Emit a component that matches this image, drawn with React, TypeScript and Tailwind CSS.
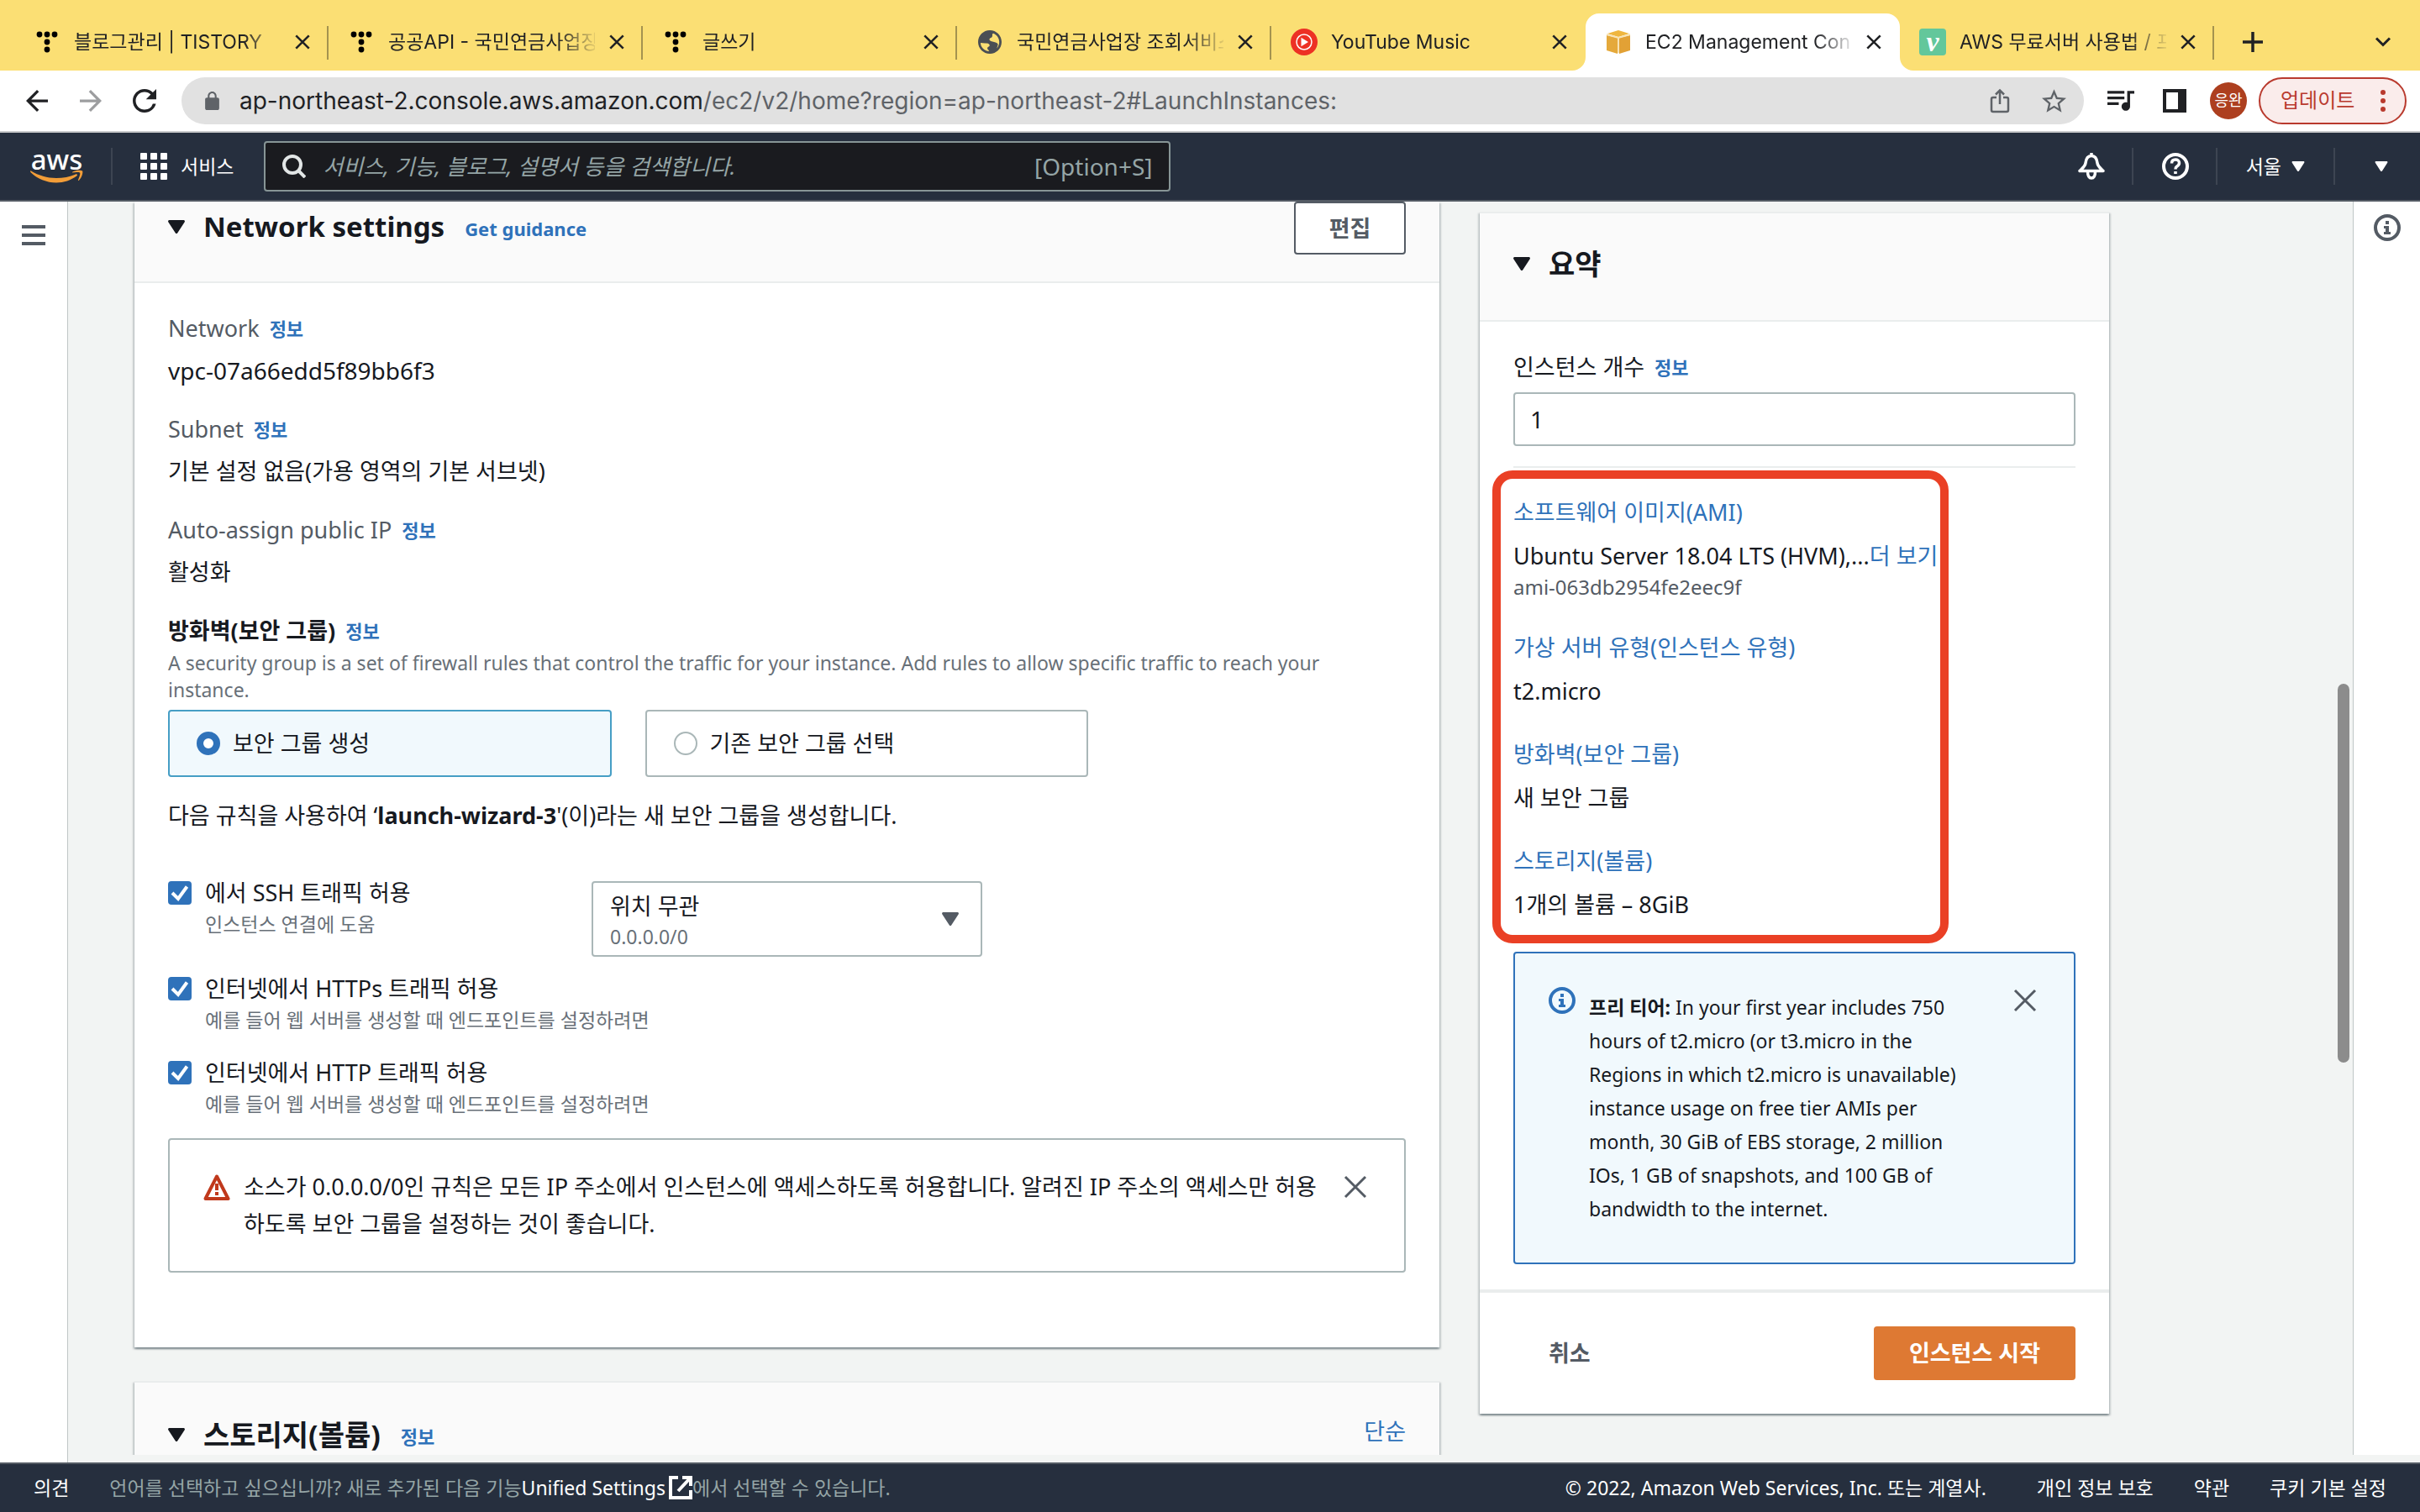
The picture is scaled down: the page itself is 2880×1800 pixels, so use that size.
import React, { useState } from 'react';

type Kids = { children: React.ReactNode };

/* ---------- icons ---------- */

function Triangle({ className }: { className: string }) {
  return (
    <svg viewBox="0 0 20 16" className={className} fill="currentColor" aria-hidden="true">
      <path d="M1.6 0h16.8c1.3 0 2 1.4 1.2 2.4l-8.3 12.9a1.6 1.6 0 0 1-2.6 0L.4 2.4C-.4 1.4.3 0 1.6 0z" />
    </svg>
  );
}

function Cross({ className, weight = 3 }: { className: string; weight?: number }) {
  return (
    <svg viewBox="0 0 28 28" className={className} fill="none" stroke="currentColor" strokeWidth={weight} aria-hidden="true">
      <path d="M2 2l24 24M26 2L2 26" />
    </svg>
  );
}

function InfoIcon({ className }: { className: string }) {
  return (
    <svg viewBox="0 0 32 32" className={className} fill="none" aria-hidden="true">
      <circle cx="16" cy="16" r="14" stroke="currentColor" strokeWidth="4" />
      <path d="M14 8h4v4h-4zM12 14h6v7h2v3h-8v-3h2v-4h-2z" fill="currentColor" />
    </svg>
  );
}

function TistoryIcon() {
  return (
    <svg viewBox="0 0 26 26" className="size-[26px]" aria-hidden="true">
      <circle cx="4" cy="4" r="3.4" />
      <circle cx="13" cy="4" r="3.4" />
      <circle cx="22" cy="4" r="3.4" />
      <circle cx="13" cy="13" r="3.4" />
      <circle cx="13" cy="22" r="3.4" />
    </svg>
  );
}

function GlobeIcon() {
  return (
    <svg viewBox="2 2 20 20" className="size-7" aria-hidden="true">
      <circle cx="12" cy="12" r="9" fill="#fbdf74" />
      <path
        fill="#4a4e54"
        d="M12 2C6.48 2 2 6.48 2 12s4.48 10 10 10 10-4.48 10-10S17.52 2 12 2zm-.6 17.93c-4.2-.3-7.2-3.5-7.3-7.2l3.9.3c1.6 0 3.6.1 3.8 1.7.1 1.1-.9 1.3-1.6 1.7-.5.6-.3 1.5.2 2 .6.5.9.9 1 1.5zm6.5-2.53c.3-1.2.8-2.2 1-3.1.1-1.1-1-1.7-2-2-1.6-.5-3.9-.6-5-1.7-.6-.9 0-1.8.9-2.1 1.3-.4 1.5-1.5 1.3-2.5-.1-.6.2-1.2.9-1.41C17.93 5.78 20 8.65 20 12c0 2.08-.8 3.97-2.1 5.39z"
      />
    </svg>
  );
}

function YouTubeMusicIcon() {
  return (
    <svg viewBox="0 0 32 32" className="size-8" aria-hidden="true">
      <circle cx="16" cy="16" r="16" fill="#ed3124" />
      <circle cx="16" cy="16" r="9" fill="none" stroke="#fff" strokeWidth="1.5" />
      <path d="M12.5 10.8l8.5 5.2-8.5 5.2z" fill="#fff" />
    </svg>
  );
}

function CubeIcon() {
  return (
    <svg viewBox="0 0 28 28" className="size-7" aria-hidden="true">
      <path d="M14 0l13 4-13 4L1 4z" fill="#efb63f" />
      <path d="M0 6l13 3v19L0 24z" fill="#e5a93b" />
      <path d="M28 6L15 9v19l13-4z" fill="#e2a135" />
      <path d="M0 5l14 4 14-4M14 9v18" stroke="#f8e3b4" strokeWidth="2" fill="none" />
    </svg>
  );
}

function VelogIcon() {
  return (
    <span className="flex size-8 items-center justify-center rounded-sm bg-[#63c79b] font-['Liberation_Serif',serif] text-[34px] leading-6 font-bold text-white italic">
      v
    </span>
  );
}

/* ---------- browser chrome ---------- */

const tabs = [
  { title: '블로그관리 | TISTORY', icon: <TistoryIcon /> },
  { title: '공공API - 국민연금사업장', icon: <TistoryIcon /> },
  { title: '글쓰기', icon: <TistoryIcon /> },
  { title: '국민연금사업장 조회서비스', icon: <GlobeIcon /> },
  { title: 'YouTube Music', icon: <YouTubeMusicIcon />, last: true },
  { title: 'EC2 Management Con', icon: <CubeIcon />, active: true },
  { title: 'AWS 무료서버 사용법 / 프', icon: <VelogIcon /> },
];

function TabStrip() {
  return (
    <div className="flex h-[84px] shrink-0 items-end bg-[#fbdf74] pl-[17px] font-[Inter,'Noto_Sans_CJK_KR',sans-serif] text-[23px] text-[#202124]">
      {tabs.map((t) => (
        <div
          key={t.title}
          className={
            t.active
              ? 'relative flex h-[68px] max-w-[374px] min-w-0 flex-1 items-center rounded-t-2xl bg-white pr-[21px] pl-[23px]'
              : 'relative flex h-[68px] max-w-[374px] min-w-0 flex-1 items-center pr-[21px] pl-[23px]'
          }
        >
          {t.active && (
            <>
              <svg viewBox="0 0 16 16" className="absolute bottom-0 -left-4 size-4" aria-hidden="true">
                <path d="M16 0v16H0A16 16 0 0 0 16 0z" fill="#fff" />
              </svg>
              <svg viewBox="0 0 16 16" className="absolute -right-4 bottom-0 size-4" aria-hidden="true">
                <path d="M0 0v16h16A16 16 0 0 1 0 0z" fill="#fff" />
              </svg>
            </>
          )}
          <span className="mr-4 flex w-8 shrink-0 justify-center">{t.icon}</span>
          <span className="mr-4 min-w-0 flex-1 overflow-hidden mask-[linear-gradient(to_right,black_82%,transparent_102%)] leading-8 whitespace-nowrap">
            {t.title}
          </span>
          <button type="button" aria-label="탭 닫기" className="flex w-5 shrink-0 justify-center">
            <Cross className="size-[18px]" weight={4} />
          </button>
          {!t.active && !t.last && <span className="absolute top-[15px] right-0 h-10 w-0.5 bg-[#a4934f]" />}
        </div>
      ))}
      <button type="button" aria-label="새 탭" className="ml-8 flex h-[68px] w-7 items-center justify-center">
        <svg viewBox="0 0 24 24" className="size-6" fill="none" stroke="currentColor" strokeWidth="3.5" aria-hidden="true">
          <path d="M12 0v24M0 12h24" />
        </svg>
      </button>
      <button type="button" aria-label="탭 검색" className="mr-[34px] ml-auto flex h-[68px] items-center">
        <svg viewBox="0 0 20 12" className="h-3 w-5" fill="none" stroke="currentColor" strokeWidth="3" aria-hidden="true">
          <path d="M2 1.5l8 8 8-8" />
        </svg>
      </button>
    </div>
  );
}

function Toolbar() {
  return (
    <div className="flex h-[74px] shrink-0 items-center border-b-2 border-[#c9cacb] bg-white pr-4 pl-7 font-[Inter,'Noto_Sans_CJK_KR',sans-serif] text-[#202124]">
      <button type="button" aria-label="뒤로" className="mr-8 flex w-8 justify-center">
        <svg viewBox="4 4 16 16" className="size-[26px]" fill="currentColor" aria-hidden="true">
          <path d="M20 11H7.83l5.59-5.59L12 4l-8 8 8 8 1.41-1.41L7.83 13H20v-2z" />
        </svg>
      </button>
      <button type="button" aria-label="앞으로" className="mr-8 flex w-8 justify-center text-[#9c9d9f]">
        <svg viewBox="4 4 16 16" className="size-[26px]" fill="currentColor" aria-hidden="true">
          <path d="M12 4l-1.41 1.41L16.17 11H4v2h12.17l-5.58 5.59L12 20l8-8z" />
        </svg>
      </button>
      <button type="button" aria-label="새로고침" className="mr-7 flex w-8 justify-center">
        <svg viewBox="4 4 16 16" className="size-7" fill="currentColor" aria-hidden="true">
          <path d="M17.65 6.35A7.958 7.958 0 0 0 12 4c-4.42 0-7.99 3.58-7.99 8s3.57 8 7.99 8c3.73 0 6.84-2.55 7.73-6h-2.08A5.99 5.99 0 0 1 12 18c-3.31 0-6-2.69-6-6s2.69-6 6-6c1.66 0 3.14.69 4.22 1.78L13 11h7V4l-2.35 2.35z" />
        </svg>
      </button>
      <div className="flex h-14 min-w-0 flex-1 items-center rounded-full bg-[#e1e1e1] pr-5 pl-7 text-[#5f6368]">
        <svg viewBox="4 1 16 21" className="mr-6 h-[22px] w-[17px] shrink-0" fill="currentColor" aria-hidden="true">
          <path d="M18 8h-1V6c0-2.76-2.24-5-5-5S7 3.24 7 6v2H6c-1.1 0-2 .9-2 2v10c0 1.1.9 2 2 2h12c1.1 0 2-.9 2-2V10c0-1.1-.9-2-2-2zM9 6c0-1.66 1.34-3 3-3s3 1.34 3 3v2H9V6z" />
        </svg>
        <span className="min-w-0 flex-1 overflow-hidden text-[28px] leading-10 whitespace-nowrap">
          <span className="text-[#202124]">ap-northeast-2.console.aws.amazon.com</span>
          /ec2/v2/home?region=ap-northeast-2#LaunchInstances:
        </span>
        <button type="button" aria-label="공유" className="mr-8 flex w-8 justify-center">
          <svg viewBox="0 0 24 30" className="h-[30px] w-6" fill="none" stroke="currentColor" strokeWidth="2.5" aria-hidden="true">
            <path d="M8 11H4a2 2 0 0 0-2 2v13a2 2 0 0 0 2 2h16a2 2 0 0 0 2-2V13a2 2 0 0 0-2-2h-4M12 19V3M7 7.5l5-5 5 5" />
          </svg>
        </button>
        <button type="button" aria-label="북마크" className="flex w-8 justify-center">
          <svg viewBox="2 2 20 19" className="h-7 w-[29px]" fill="currentColor" aria-hidden="true">
            <path d="M22 9.24l-7.19-.62L12 2 9.19 8.63 2 9.24l5.46 4.73L5.82 21 12 17.27 18.18 21l-1.63-7.03L22 9.24zM12 15.4l-3.76 2.27 1-4.28-3.32-2.88 4.38-.38L12 6.1l1.71 4.04 4.38.38-3.32 2.88 1 4.28L12 15.4z" />
          </svg>
        </button>
      </div>
      <button type="button" aria-label="미디어" className="mr-8 ml-7">
        <svg viewBox="3 6 19 14" className="h-6 w-8" fill="currentColor" aria-hidden="true">
          <path d="M15 6H3v2h12V6zm0 4H3v2h12v-2zM3 16h8v-2H3v2zM17 6v8.18c-.31-.11-.65-.18-1-.18-1.66 0-3 1.34-3 3s1.34 3 3 3 3-1.34 3-3V8h3V6h-5z" />
        </svg>
      </button>
      <button type="button" aria-label="측면 패널" className="mr-[26px] flex w-8 justify-center">
        <span className="h-7 w-7 border-4 border-r-[10px] border-[#202124]" />
      </button>
      <span className="mr-3.5 flex size-11 items-center justify-center rounded-full bg-[#ad3f1f] text-lg leading-6 text-white">응완</span>
      <button
        type="button"
        className="flex h-14 w-44 items-center rounded-full border-2 border-[#b93a2e] bg-[#faeceb] pl-6 text-2xl leading-8 text-[#b93a2e]"
      >
        업데이트
        <span className="mr-[23px] ml-auto flex flex-col gap-1">
          <span className="size-1.5 rounded-full bg-current" />
          <span className="size-1.5 rounded-full bg-current" />
          <span className="size-1.5 rounded-full bg-current" />
        </span>
      </button>
    </div>
  );
}

/* ---------- console header and footer ---------- */

function Rule({ className = '' }: { className?: string }) {
  return <span className={'h-11 w-0.5 shrink-0 bg-[#3d4552] ' + className} />;
}

function ConsoleHeader() {
  return (
    <header className="flex h-[82px] shrink-0 items-center border-b-2 border-[#545b64] bg-[#262f3e] pr-[38px] pl-9 text-white">
      <a href="#home" aria-label="AWS" className="flex w-[63px] flex-col items-center">
        <span className="text-[33px] leading-6 font-medium">aws</span>
        <svg viewBox="0 0 63 16" className="h-4 w-[63px]" fill="#f29d38" aria-hidden="true">
          <path d="M1 1.5c9 5.5 19 8.5 30 8.500 8 0 16-1.500 23-4.500 1.500-.6 2.700 1 1.300 2C48.500 12.500 40 15.500 31 15.500 19.500 15.500 8.500 11 .6 3.300c-1-.9-.6-2.400.4-1.800z" />
          <path
            d="M57.500 4.300c-1-1.200-6-.6-8.300-.3-.7.1-.8-.5-.2-.9C53 .3 59.800 1.100 60.600 2c.8 1-.2 7.900-4.200 11.200-.6.500-1.200.2-.9-.4.900-2.200 3-7.300 2-8.500z"
            transform="translate(1.5 -.5)"
          />
        </svg>
      </a>
      <Rule className="ml-[33px]" />
      <button type="button" className="ml-[33px] flex items-center gap-4 text-[23px] leading-8">
        <span className="grid grid-cols-3 gap-1">
          {Array.from({ length: 9 }, (_, i) => (
            <span key={i} className="size-2 rounded-[1px] bg-white" />
          ))}
        </span>
        서비스
      </button>
      <div className="ml-9 flex h-[60px] w-[1079px] items-center rounded-sm border-2 border-[#879596] bg-[#1a1b1f] px-5">
        <svg viewBox="0 0 28 28" className="mr-5 size-7 shrink-0 text-[#e2e6e6]" fill="none" stroke="currentColor" strokeWidth="4" aria-hidden="true">
          <circle cx="12" cy="12" r="10" />
          <path d="M19 19l8 8" />
        </svg>
        <input
          type="search"
          aria-label="검색"
          placeholder="서비스, 기능, 블로그, 설명서 등을 검색합니다."
          className="min-w-0 flex-1 bg-transparent text-[26px] leading-10 outline-none placeholder:text-[#95a5a6] placeholder:italic"
        />
        <span className="text-[28px] leading-10 text-[#95a5a6]">[Option+S]</span>
      </div>
      <button type="button" aria-label="알림" className="ml-auto">
        <svg viewBox="0 0 32 32" className="size-8" fill="none" stroke="currentColor" strokeWidth="3.5" strokeLinejoin="round" aria-hidden="true">
          <path d="M16 0v3M16 3.500c-4.500 0-6.500 4-7 8.500-.4 4-3.500 6-7 9.500h28c-3.500-3.500-6.600-5.500-7-9.500-.5-4.500-2.500-8.500-7-8.500zM11.500 22c0 5 1.500 8 4.500 8s4.500-3 4.500-8" />
        </svg>
      </button>
      <Rule className="ml-8" />
      <button type="button" aria-label="도움말" className="ml-[34px]">
        <svg viewBox="0 0 32 32" className="size-8" fill="none" stroke="currentColor" aria-hidden="true">
          <circle cx="16" cy="16" r="14" strokeWidth="4" />
          <path d="M11.5 12.5c0-3 2-4.500 4.500-4.500s4.500 1.500 4.500 4-1.500 3.300-3 4.300c-1 .7-1.500 1.300-1.500 3.200" strokeWidth="3.5" />
          <path d="M14.2 22h3.600v3h-3.600z" fill="currentColor" stroke="none" />
        </svg>
      </button>
      <Rule className="ml-8" />
      <button type="button" className="ml-[34px] flex items-center gap-3 text-[23px] leading-8">
        서울
        <Triangle className="h-3 w-4" />
      </button>
      <Rule className="ml-[34px]" />
      <button type="button" aria-label="계정" className="ml-[47px]">
        <Triangle className="h-3 w-4" />
      </button>
    </header>
  );
}

function ConsoleFooter() {
  return (
    <footer className="flex h-[59px] shrink-0 items-center border-t-2 border-[#545b64] bg-[#262f3e] px-10 pb-0.5 text-[23px] leading-8 whitespace-nowrap text-white">
      <button type="button">의견</button>
      <p className="ml-12 flex items-center text-[#95a5a6]">
        언어를 선택하고 싶으십니까? 새로 추가된 다음 기능
        <a href="#settings" className="flex items-center gap-1 text-white">
          Unified Settings
          <svg viewBox="0 0 28 28" className="size-7" fill="none" stroke="currentColor" strokeWidth="4" aria-hidden="true">
            <path d="M11 2H2v24h24v-9M16 2h10v10M25 3L11 18" />
          </svg>
        </a>
        에서 선택할 수 있습니다.
      </p>
      <span className="ml-auto">© 2022, Amazon Web Services, Inc. 또는 계열사.</span>
      <a href="#privacy" className="ml-[60px]">개인 정보 보호</a>
      <a href="#terms" className="ml-12">약관</a>
      <a href="#cookies" className="ml-12">쿠키 기본 설정</a>
    </footer>
  );
}

/* ---------- shared pieces ---------- */

const cardShadow =
  'bg-white shadow-[0_2px_2px_0_rgba(0,28,36,0.3),2px_2px_2px_0_rgba(0,28,36,0.15),-2px_2px_2px_0_rgba(0,28,36,0.15)]';

function InfoLink() {
  return (
    <a href="#info" className="ml-3 text-[22px] font-bold text-[#2f72ba]">
      정보
    </a>
  );
}

function Detail({ label, children, latin = false }: Kids & { label: string; latin?: boolean }) {
  return (
    <div className="mb-[30px] flex flex-col gap-2.5 leading-10">
      <dt className="flex items-center text-[27px] text-[#545b64]">
        {label}
        <InfoLink />
      </dt>
      <dd className={latin ? 'text-[28px]' : 'text-[27px]'}>{children}</dd>
    </div>
  );
}

function RadioTile({ label, checked, onSelect }: { label: string; checked: boolean; onSelect: () => void }) {
  return (
    <label
      className={
        checked
          ? 'flex h-20 items-center gap-[15px] rounded-sm border-2 border-[#469ec5] bg-[#f1f9fd] px-8 text-[27px] leading-10'
          : 'flex h-20 items-center gap-[15px] rounded-sm border-2 border-[#aab7b8] bg-white px-8 text-[27px] leading-10'
      }
    >
      <input
        type="radio"
        name="security-group"
        checked={checked}
        onChange={onSelect}
        className="size-7 shrink-0 appearance-none rounded-full border-2 border-[#aab7b8] bg-white checked:border-8 checked:border-[#2f72ba]"
      />
      {label}
    </label>
  );
}

function CheckRow({ id, label, hint }: { id: string; label: string; hint: string }) {
  return (
    <div className="flex gap-4">
      <span className="relative mt-1.5 size-7 shrink-0">
        <input
          id={id}
          type="checkbox"
          defaultChecked
          className="peer block size-7 appearance-none rounded-sm border-2 border-[#aab7b8] bg-white checked:border-[#2f72ba] checked:bg-[#2f72ba]"
        />
        <svg
          viewBox="0 0 28 28"
          className="pointer-events-none absolute inset-0 hidden size-7 text-white peer-checked:block"
          fill="none"
          stroke="currentColor"
          strokeWidth="4"
          aria-hidden="true"
        >
          <path d="M5 14l7 7L22.5 6.5" />
        </svg>
      </span>
      <div className="flex flex-col gap-px">
        <label htmlFor={id} className="text-[27px] leading-10">
          {label}
        </label>
        <span className="text-[23px] leading-8 text-[#687078]">{hint}</span>
      </div>
    </div>
  );
}

/* ---------- network settings ---------- */

function NetworkCard() {
  const [group, setGroup] = useState('new');
  return (
    <section className={cardShadow}>
      <div className="flex h-[97px] items-start border-b-2 border-[#eaeded] bg-[#fafafa] px-10">
        <h2 className="mt-1.5 flex items-center text-[33px] leading-[44px] font-bold">
          <Triangle className="mr-[22px] h-4 w-5" />
          Network settings
          <a href="#guidance" className="mt-1 ml-6 text-[22px] text-[#2f72ba]">
            Get guidance
          </a>
        </h2>
        <button
          type="button"
          className="ml-auto h-[63px] w-[133px] rounded-sm border-2 border-[#545b64] bg-white text-[27px] leading-10 font-bold text-[#545b64]"
        >
          편집
        </button>
      </div>
      <div className="px-10 pt-[34px] pb-[89px]">
        <dl>
          <Detail label="Network" latin>
            vpc-07a66edd5f89bb6f3
          </Detail>
          <Detail label="Subnet">기본 설정 없음(가용 영역의 기본 서브넷)</Detail>
          <Detail label="Auto-assign public IP">활성화</Detail>
        </dl>
        <h3 className="flex items-center text-[27px] leading-10 font-bold">
          방화벽(보안 그룹)
          <InfoLink />
        </h3>
        <p className="mt-0.5 max-w-[1440px] text-[23px] leading-8 text-[#687078]">
          A security group is a set of firewall rules that control the traffic for your instance. Add rules to allow specific traffic to
          reach your instance.
        </p>
        <div className="mt-2 grid max-w-[1095px] grid-cols-2 gap-10">
          <RadioTile label="보안 그룹 생성" checked={group === 'new'} onSelect={() => setGroup('new')} />
          <RadioTile label="기존 보안 그룹 선택" checked={group === 'existing'} onSelect={() => setGroup('existing')} />
        </div>
        <p className="mt-[26px] text-[27px] leading-10">
          다음 규칙을 사용하여 ‘<b>launch-wizard-3</b>'(이)라는 새 보안 그룹을 생성합니다.
        </p>
        <div className="mt-[52px] grid grid-cols-[504px_465px]">
          <CheckRow id="ssh" label="에서 SSH 트래픽 허용" hint="인스턴스 연결에 도움" />
          <div className="relative mt-1.5 flex h-[90px] flex-col rounded-sm border-2 border-[#aab7b8] bg-white pt-2 pl-5">
            <select aria-label="소스 유형" className="w-full appearance-none bg-transparent text-[27px] leading-10 outline-none">
              <option>위치 무관</option>
            </select>
            <span className="text-[23px] leading-8 text-[#687078]">0.0.0.0/0</span>
            <Triangle className="pointer-events-none absolute top-[35px] right-[26px] h-4 w-5 text-[#545b64]" />
          </div>
        </div>
        <div className="mt-[18px] flex flex-col gap-[27px]">
          <CheckRow id="https" label="인터넷에서 HTTPs 트래픽 허용" hint="예를 들어 웹 서버를 생성할 때 엔드포인트를 설정하려면" />
          <CheckRow id="http" label="인터넷에서 HTTP 트래픽 허용" hint="예를 들어 웹 서버를 생성할 때 엔드포인트를 설정하려면" />
        </div>
        <div role="alert" className="mt-[25px] flex items-start rounded-sm border-2 border-[#aab7b8] py-[34px] pr-[44px] pl-10">
          <svg viewBox="0 0 32 32" className="mt-1.5 mr-4 size-8 shrink-0 text-[#c0391c]" fill="none" stroke="currentColor" aria-hidden="true">
            <path d="M16 3.5L29.5 30h-27z" strokeWidth="4" strokeLinejoin="round" />
            <path d="M16 12v8M16 22v4" strokeWidth="4" />
          </svg>
          <p className="flex-1 text-[27px] leading-[44px] break-all">
            소스가 0.0.0.0/0인 규칙은 모든 IP 주소에서 인스턴스에 액세스하도록 허용합니다. 알려진 IP 주소의 액세스만 허용하도록 보안 그룹을
            설정하는 것이 좋습니다.
          </p>
          <button type="button" aria-label="닫기" className="mt-2 ml-5 shrink-0 text-[#545b64]">
            <Cross className="size-7" />
          </button>
        </div>
      </div>
    </section>
  );
}

function StorageCard() {
  return (
    <section className={'mt-10 ' + cardShadow}>
      <div className="flex items-center border-t-2 border-[#eaeded] bg-[#fafafa] px-10 pt-[38px] pb-10">
        <h2 className="flex items-center text-[34px] leading-[44px] font-bold">
          <Triangle className="mr-[22px] h-4 w-5" />
          스토리지(볼륨)
          <a href="#info" className="mt-1 ml-6 text-[22px] text-[#2f72ba]">
            정보
          </a>
        </h2>
        <a href="#simple" className="mb-2 ml-auto text-[27px] leading-10 text-[#2f72ba]">
          단순
        </a>
      </div>
    </section>
  );
}

/* ---------- summary ---------- */

function SummaryItem({ label, children }: Kids & { label: string }) {
  return (
    <div className="text-[27px] leading-10">
      <dt className="mb-3">
        <a href="#section" className="text-[#2f72ba]">
          {label}
        </a>
      </dt>
      <dd>{children}</dd>
    </div>
  );
}

function SummaryCard() {
  return (
    <aside className={'mt-3 self-start ' + cardShadow}>
      <div className="border-t-2 border-b-2 border-[#eaeded] bg-[#fafafa] px-10 pt-[38px] pb-[45px]">
        <h2 className="flex items-center text-[34px] leading-[44px] font-bold">
          <Triangle className="mr-[22px] h-4 w-5" />
          요약
        </h2>
      </div>
      <div className="px-10 pt-[34px] pb-[30px]">
        <div className="mb-2.5 flex items-center text-[27px] leading-10">
          <label htmlFor="count">인스턴스 개수</label>
          <InfoLink />
        </div>
        <input
          id="count"
          defaultValue="1"
          className="block h-16 w-full rounded-sm border-2 border-[#aab7b8] bg-white px-[18px] text-[28px] leading-10 outline-none"
        />
        <div className="relative mt-6 border-t-2 border-[#eaeded] pt-[33px] pb-9">
          <dl className="flex flex-col gap-[35px]">
            <SummaryItem label="소프트웨어 이미지(AMI)">
              <span className="block text-[27px] whitespace-nowrap">
                Ubuntu Server 18.04 LTS (HVM),...
                <a href="#more" className="text-[#2f72ba]">
                  더 보기
                </a>
              </span>
              <span className="block text-2xl leading-[34px] text-[#545b64]">ami-063db2954fe2eec9f</span>
            </SummaryItem>
            <SummaryItem label="가상 서버 유형(인스턴스 유형)">t2.micro</SummaryItem>
            <SummaryItem label="방화벽(보안 그룹)">새 보안 그룹</SummaryItem>
            <SummaryItem label="스토리지(볼륨)">1개의 볼륨 – 8GiB</SummaryItem>
          </dl>
          <span className="pointer-events-none absolute top-[3px] bottom-2.5 -left-[25px] w-[543px] rounded-3xl border-10 border-[#ea4025]" />
        </div>
        <div className="flex items-start rounded-sm border-2 border-[#2f72ba] bg-[#f1f9fd] pt-10 pr-[44px] pb-11 pl-10">
          <InfoIcon className="mr-4 size-8 shrink-0 text-[#2f72ba]" />
          <p className="mt-1 flex-1 text-[23px] leading-10">
            <b>프리 티어:</b> In your first year includes 750 hours of t2.micro (or t3.micro in the Regions in which t2.micro is unavailable)
            instance usage on free tier AMIs per month, 30 GiB of EBS storage, 2 million IOs, 1 GB of snapshots, and 100 GB of bandwidth to
            the internet.
          </p>
          <button type="button" aria-label="닫기" className="mt-0.5 ml-12 shrink-0 text-[#545b64]">
            <Cross className="size-7" />
          </button>
        </div>
      </div>
      <div className="flex items-center justify-between border-t-4 border-[#eaeded] py-10 pr-10 pl-[82px] text-[27px] leading-10 font-bold">
        <button type="button" className="text-[#545b64]">
          취소
        </button>
        <button type="button" className="h-16 rounded-sm bg-[#de7933] px-[42px] text-white">
          인스턴스 시작
        </button>
      </div>
    </aside>
  );
}

/* ---------- page ---------- */

export default function App() {
  return (
    <div className="flex h-screen flex-col overflow-hidden bg-[#f2f4f3] font-['Noto_Sans','Noto_Sans_CJK_KR',sans-serif] text-[#16191f]">
      <TabStrip />
      <Toolbar />
      <ConsoleHeader />
      <div className="flex min-h-0 flex-1">
        <nav className="w-[81px] shrink-0 border-r border-[#bfc6c6] bg-white pt-7 pl-[26px]">
          <button type="button" aria-label="메뉴" className="flex w-7 flex-col gap-1.5">
            <span className="h-1 w-full bg-[#545b64]" />
            <span className="h-1 w-full bg-[#545b64]" />
            <span className="h-1 w-full bg-[#545b64]" />
          </button>
        </nav>
        <div className="mb-[9px] flex min-w-0 flex-1">
          <main className="relative min-w-0 flex-1 overflow-hidden pr-[290px] pl-[79px]">
            <div className="grid grid-cols-[minmax(0,1fr)_749px] gap-x-12">
              <div>
                <NetworkCard />
                <StorageCard />
              </div>
              <SummaryCard />
            </div>
            <span className="absolute top-[574px] right-1 h-[451px] w-3.5 rounded-full bg-[#8c8c8c]" />
          </main>
          <div className="flex w-20 shrink-0 items-start justify-center border-l border-[#bfc6c6] bg-white pt-[15px]">
            <button type="button" aria-label="정보 패널">
              <InfoIcon className="size-8 text-[#545b64]" />
            </button>
          </div>
        </div>
      </div>
      <ConsoleFooter />
    </div>
  );
}
